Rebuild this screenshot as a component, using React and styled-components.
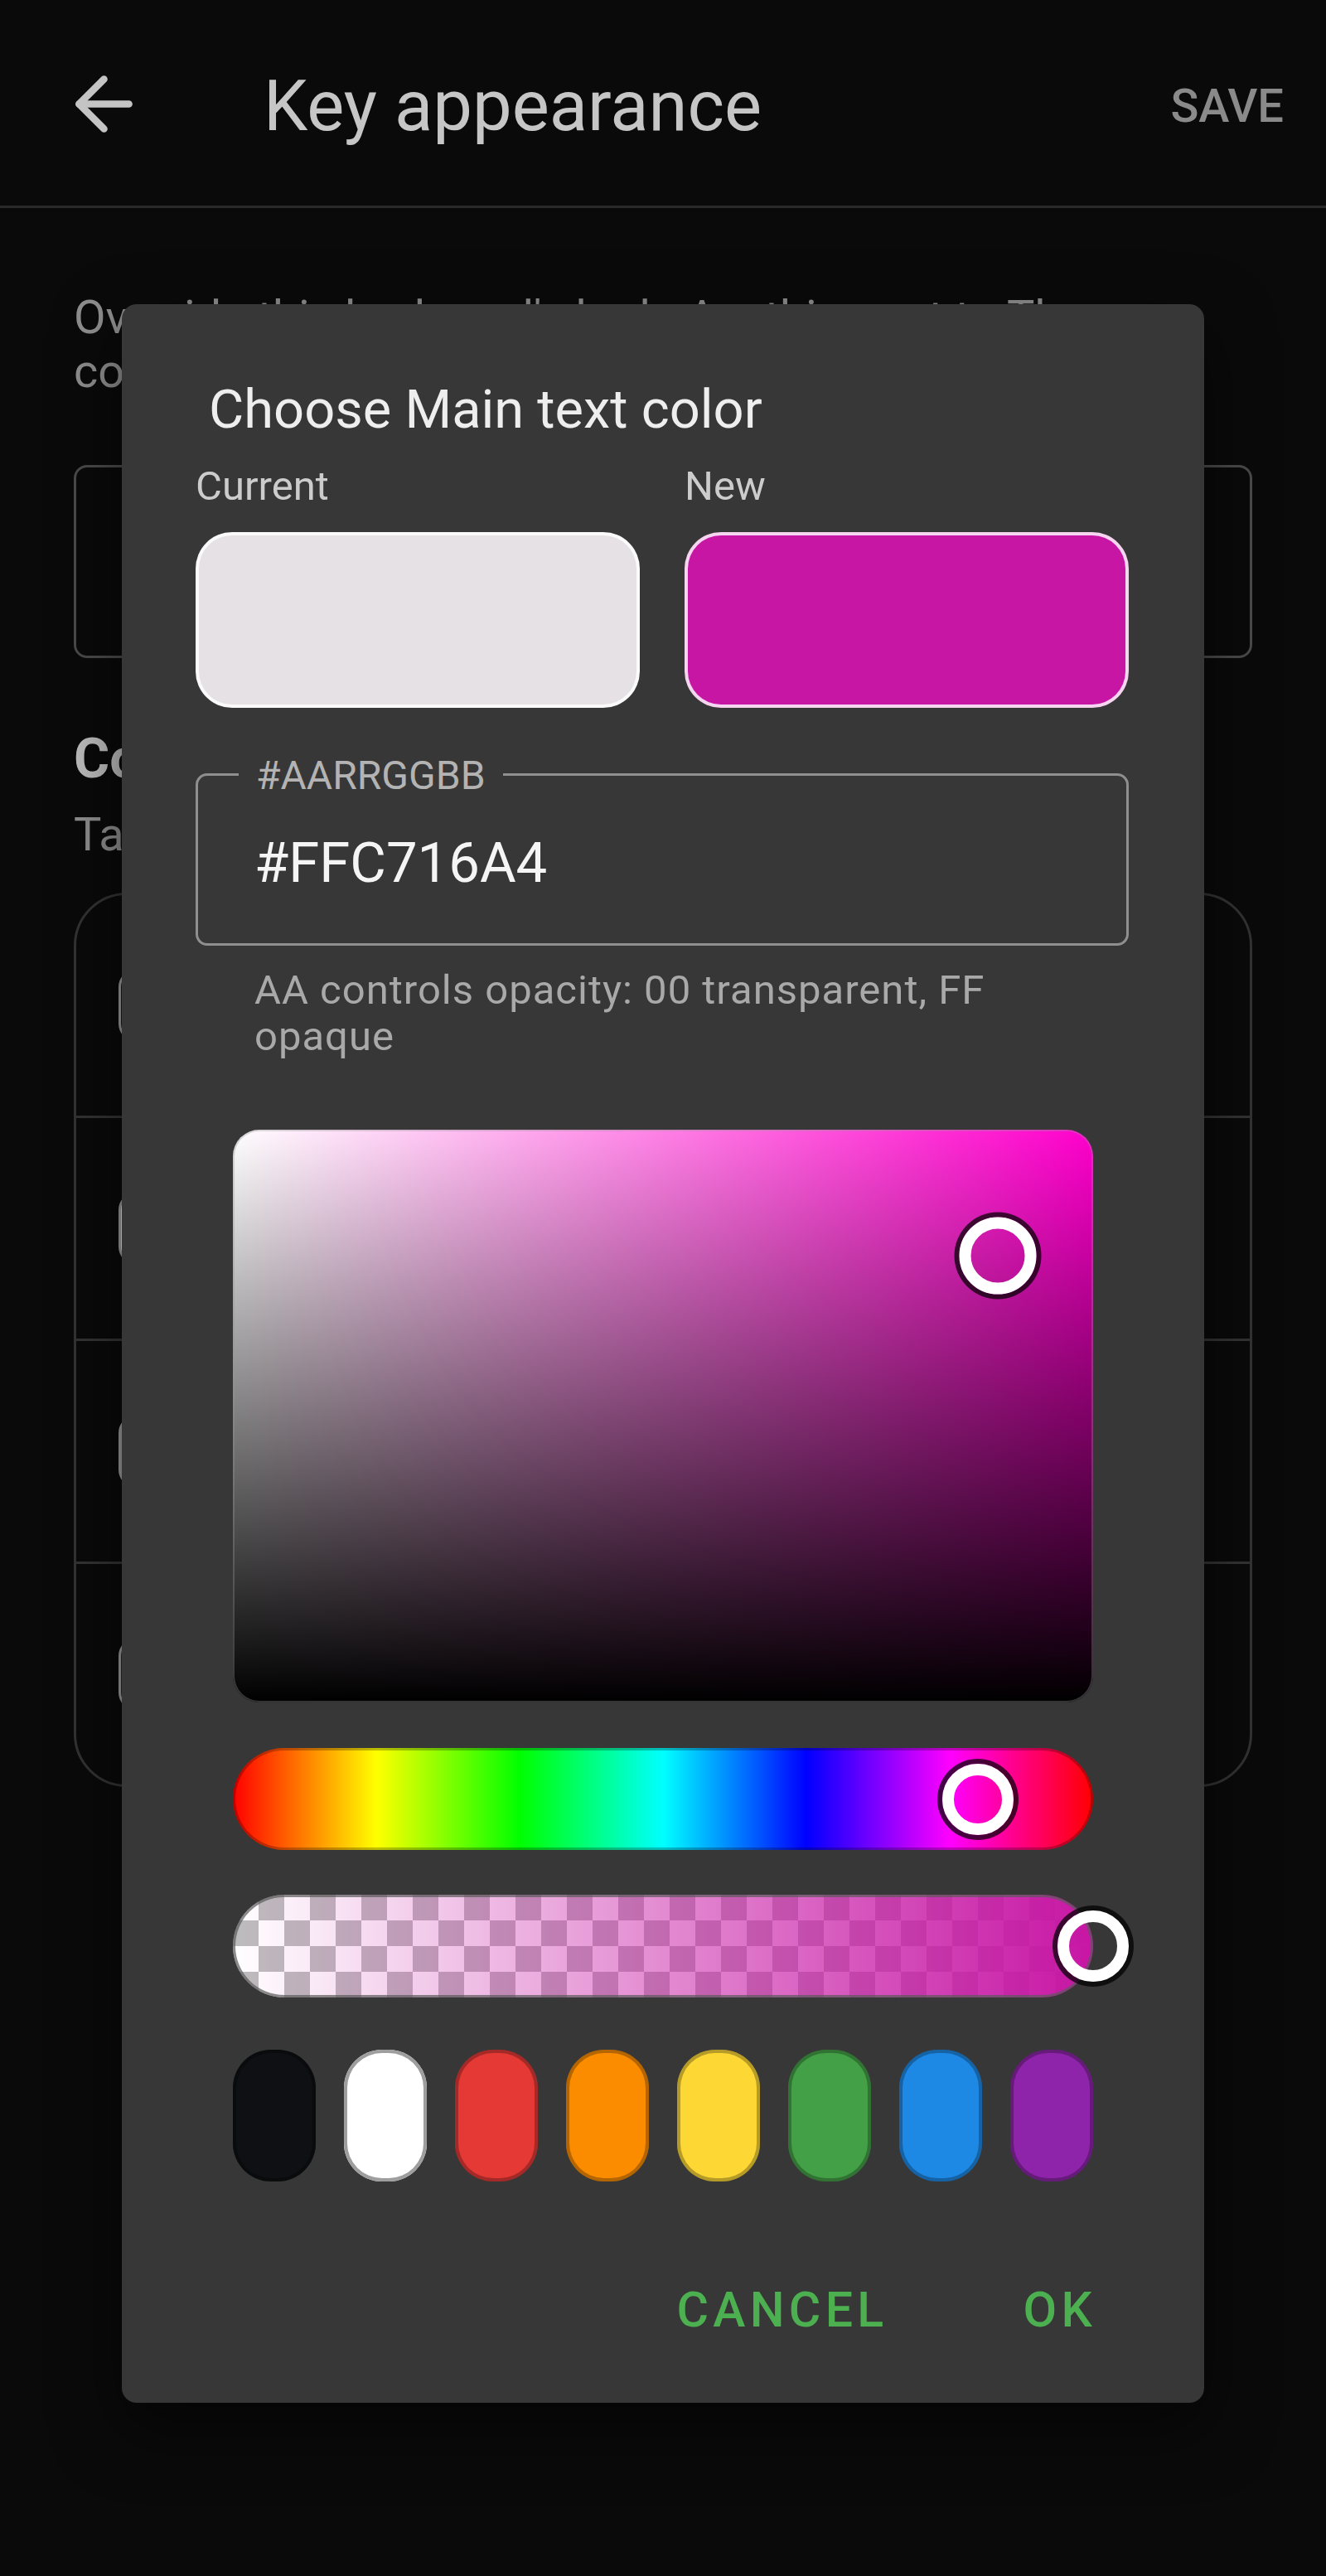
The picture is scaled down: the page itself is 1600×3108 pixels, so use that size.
import React from "react";
import styled, { createGlobalStyle } from "styled-components";
import { ArrowLeft } from "lucide-react";

const FONT = `Roboto, "Noto Sans", "Liberation Sans", Arial, sans-serif`;

const GlobalStyle = createGlobalStyle`
  html, body { margin: 0; padding: 0; background: #0a0a0a; }
  body { font-family: ${FONT}; }
  *, *::before, *::after { box-sizing: border-box; }
`;

const Screen = styled.div`
  position: relative;
  width: 1600px;
  height: 3108px;
  background: #0a0a0a;
  overflow: hidden;
  font-family: ${FONT};
`;

/* ---------- top app bar ---------- */
const TopBar = styled.header`
  display: flex;
  align-items: center;
  height: 251px;
  padding: 8px 51px 0 74px;
  border-bottom: 3px solid #2a2a2a;
`;

const BackButton = styled.button`
  display: flex;
  align-items: center;
  justify-content: center;
  width: 103px;
  height: 103px;
  padding: 0;
  margin-bottom: 6px;
  border: none;
  background: none;
  color: #c4c4c4;
`;

const BarTitle = styled.h1`
  flex: 1;
  margin: 0 0 0 141px;
  font-size: 85px;
  line-height: 99px;
  font-weight: 400;
  color: #c6c6c6;
`;

const SaveAction = styled.span`
  font-size: 56px;
  line-height: 66px;
  font-weight: 500;
  color: #8a8a8a;
`;

/* ---------- page body (behind dialog) ---------- */
const Body = styled.main`
  padding: 100px 89px 0;
`;

const Description = styled.p`
  margin: 0;
  font-size: 56px;
  line-height: 65px;
  color: #8e8e8e;
`;

const OutlineCard = styled.div`
  margin-top: 80px;
  height: 233px;
  border: 3px solid #4a4a4a;
  border-radius: 16px;
`;

const SectionTitle = styled.h2`
  margin: 83px 0 0;
  font-size: 66px;
  line-height: 77px;
  font-weight: 700;
  color: #bdbdbd;
`;

const SectionHint = styled.p`
  margin: 21px 0 0;
  font-size: 56px;
  line-height: 65px;
  color: #8e8e8e;
`;

const ColorList = styled.div`
  margin-top: 37px;
  border: 3px solid #333333;
  border-radius: 64px;
  overflow: hidden;
`;

const ColorRow = styled.div`
  display: flex;
  align-items: center;
  height: ${(p) => (p.$first ? "266px" : "269px")};
  padding-left: 51px;
  border-top: ${(p) => (p.$first ? "none" : "3px solid #333333")};
`;

const RowChip = styled.div`
  width: 88px;
  height: 88px;
  border-radius: 22px;
  border: 3px solid #9a9a9a;
  background: ${(p) => p.$color};
`;

/* ---------- dialog ---------- */
const Dialog = styled.section`
  position: absolute;
  left: 147px;
  top: 367px;
  width: 1306px;
  padding: 89px 91px 78px 89px;
  background: #373737;
  border-radius: 18px;
  box-shadow: 0 30px 80px rgba(0, 0, 0, 0.55);
`;

const DialogTitle = styled.h3`
  margin: 0 0 0 16px;
  font-size: 65px;
  line-height: 77px;
  font-weight: 400;
  color: #eeeeee;
`;

const CompareGrid = styled.div`
  display: grid;
  grid-template-columns: 1fr 1fr;
  column-gap: 54px;
  margin-top: 25px;
`;

const CompareColumn = styled.div`
  display: flex;
  flex-direction: column;
`;

const CompareLabel = styled.span`
  font-size: 49px;
  line-height: 57px;
  color: #cccccc;
  margin-bottom: 27px;
`;

const ColorPreview = styled.div`
  height: 212px;
  border-radius: 44px;
  background: ${(p) => p.$color};
  border: 4px solid rgba(255, 255, 255, 0.82);
`;

const HexField = styled.div`
  position: relative;
  margin-top: 79px;
  height: 208px;
  padding: 66px 68px 0;
  border: 3px solid #8f8f8f;
  border-radius: 14px;
`;

const HexLabel = styled.span`
  position: absolute;
  top: -24px;
  left: 49px;
  padding: 0 21px;
  background: #373737;
  font-size: 48px;
  line-height: 48px;
  color: #b3b3b3;
`;

const HexValue = styled.div`
  font-size: 67px;
  line-height: 78px;
  color: #f5f5f5;
`;

const HelperText = styled.p`
  margin: 26px 0 0 71px;
  font-size: 49px;
  line-height: 56px;
  letter-spacing: 1px;
  color: #a9a9a9;
`;

const PickerArea = styled.div`
  margin: 84px 43px 0 45px;
`;

const SatValBox = styled.div`
  position: relative;
  height: 691px;
  border-radius: 32px;
  background: linear-gradient(to top, #000000, rgba(0, 0, 0, 0)),
    linear-gradient(to right, #ffffff, ${(p) => p.$hue});
  box-shadow: inset 0 0 0 2px rgba(150, 150, 150, 0.35);
`;

const SliderTrack = styled.div`
  position: relative;
  margin-top: ${(p) => p.$gap}px;
  height: ${(p) => p.$h}px;
  border-radius: 62px;
`;

const HueTrack = styled(SliderTrack)`
  background: linear-gradient(
    to right,
    #ff0000 0%,
    #ffff00 16.67%,
    #00ff00 33.33%,
    #00ffff 50%,
    #0000ff 66.67%,
    #ff00ff 83.33%,
    #ff0000 100%
  );
  box-shadow: inset 0 0 0 3px rgba(0, 0, 0, 0.25);
`;

const AlphaTrack = styled(SliderTrack)`
  background-image: linear-gradient(
      to right,
      rgba(199, 22, 164, 0),
      rgba(199, 22, 164, 1)
    ),
    conic-gradient(#bdbdbd 0 25%, #ffffff 0 50%, #bdbdbd 0 75%, #ffffff 0);
  background-size: 100% 100%, 62px 62px;
  box-shadow: inset 0 0 0 3px rgba(90, 90, 90, 0.7);
`;

const Thumb = styled.div`
  position: absolute;
  width: ${(p) => p.$size}px;
  height: ${(p) => p.$size}px;
  border-radius: 50%;
  border: ${(p) => p.$ring}px solid #ffffff;
  box-shadow: 0 0 0 6px rgba(0, 0, 0, 0.72);
  transform: translate(-50%, -50%);
`;

const PresetRow = styled.div`
  display: flex;
  justify-content: space-between;
  margin-top: 63px;
`;

const Preset = styled.div`
  width: 100px;
  height: 159px;
  border-radius: 46px;
  background: ${(p) => p.$color};
  box-shadow: inset 0 0 0 4px ${(p) => p.$edge};
`;

const ButtonRow = styled.div`
  display: flex;
  justify-content: flex-end;
  gap: 163px;
  margin-top: 120px;
  padding-right: 39px;
`;

const TextButton = styled.button`
  padding: 0;
  border: none;
  background: none;
  font-family: ${FONT};
  font-size: 59px;
  line-height: 69px;
  font-weight: 500;
  letter-spacing: 5.3px;
  color: #4caf50;
`;

const presets = [
  { c: "#0e1013", e: "rgba(0,0,0,0.3)" },
  { c: "#ffffff", e: "#9e9e9e" },
  { c: "#e53935", e: "rgba(0,0,0,0.28)" },
  { c: "#fb8c00", e: "rgba(0,0,0,0.28)" },
  { c: "#fdd835", e: "rgba(0,0,0,0.28)" },
  { c: "#43a047", e: "rgba(0,0,0,0.28)" },
  { c: "#1e88e5", e: "rgba(0,0,0,0.28)" },
  { c: "#8e24aa", e: "rgba(0,0,0,0.28)" },
];

function rgbToHsv(r, g, b) {
  const R = r / 255, G = g / 255, B = b / 255;
  const max = Math.max(R, G, B), min = Math.min(R, G, B);
  const d = max - min;
  let h = 0;
  if (d !== 0) {
    if (max === R) h = ((G - B) / d) % 6;
    else if (max === G) h = (B - R) / d + 2;
    else h = (R - G) / d + 4;
    h *= 60;
    if (h < 0) h += 360;
  }
  return { h, s: max === 0 ? 0 : d / max, v: max };
}

export default function App() {
  const hsv = rgbToHsv(0xc7, 0x16, 0xa4);
  const hueColor = `hsl(${hsv.h}, 100%, 50%)`;

  return (
    <Screen>
      <GlobalStyle />
      <TopBar>
        <BackButton aria-label="Back">
          <ArrowLeft size={103} strokeWidth={2} />
        </BackButton>
        <BarTitle>Key appearance</BarTitle>
        <SaveAction>SAVE</SaveAction>
      </TopBar>

      <Body>
        <Description>
          Override this keyboard's look. Anything set to Theme
          <br />
          colors
        </Description>
        <OutlineCard />
        <SectionTitle>Colors</SectionTitle>
        <SectionHint>Tap</SectionHint>
        <ColorList>
          <ColorRow $first>
            <RowChip $color="#1c1c1c" />
          </ColorRow>
          <ColorRow>
            <RowChip $color="#e6e1e5" />
          </ColorRow>
          <ColorRow>
            <RowChip $color="#9e9e9e" />
          </ColorRow>
          <ColorRow>
            <RowChip $color="#2a2a2a" />
          </ColorRow>
        </ColorList>
      </Body>

      <Dialog role="dialog">
        <DialogTitle>Choose Main text color</DialogTitle>
        <CompareGrid>
          <CompareColumn>
            <CompareLabel>Current</CompareLabel>
            <ColorPreview $color="#e6e1e5" />
          </CompareColumn>
          <CompareColumn>
            <CompareLabel>New</CompareLabel>
            <ColorPreview $color="#c716a4" />
          </CompareColumn>
        </CompareGrid>

        <HexField>
          <HexLabel>#AARRGGBB</HexLabel>
          <HexValue>#FFC716A4</HexValue>
        </HexField>
        <HelperText>
          AA controls opacity: 00 transparent, FF
          <br />
          opaque
        </HelperText>

        <PickerArea>
          <SatValBox $hue={hueColor}>
            <Thumb
              $size={93}
              $ring={14}
              style={{ left: `${hsv.s * 100}%`, top: `${(1 - hsv.v) * 100}%` }}
            />
          </SatValBox>
          <HueTrack $gap={55} $h={123}>
            <Thumb
              $size={86}
              $ring={14}
              style={{ left: `${(hsv.h / 360) * 100}%`, top: "50%" }}
            />
          </HueTrack>
          <AlphaTrack $gap={54} $h={124}>
            <Thumb $size={86} $ring={14} style={{ left: "100%", top: "50%" }} />
          </AlphaTrack>
          <PresetRow>
            {presets.map((p) => (
              <Preset key={p.c} $color={p.c} $edge={p.e} />
            ))}
          </PresetRow>
        </PickerArea>

        <ButtonRow>
          <TextButton>CANCEL</TextButton>
          <TextButton>OK</TextButton>
        </ButtonRow>
      </Dialog>
    </Screen>
  );
}
